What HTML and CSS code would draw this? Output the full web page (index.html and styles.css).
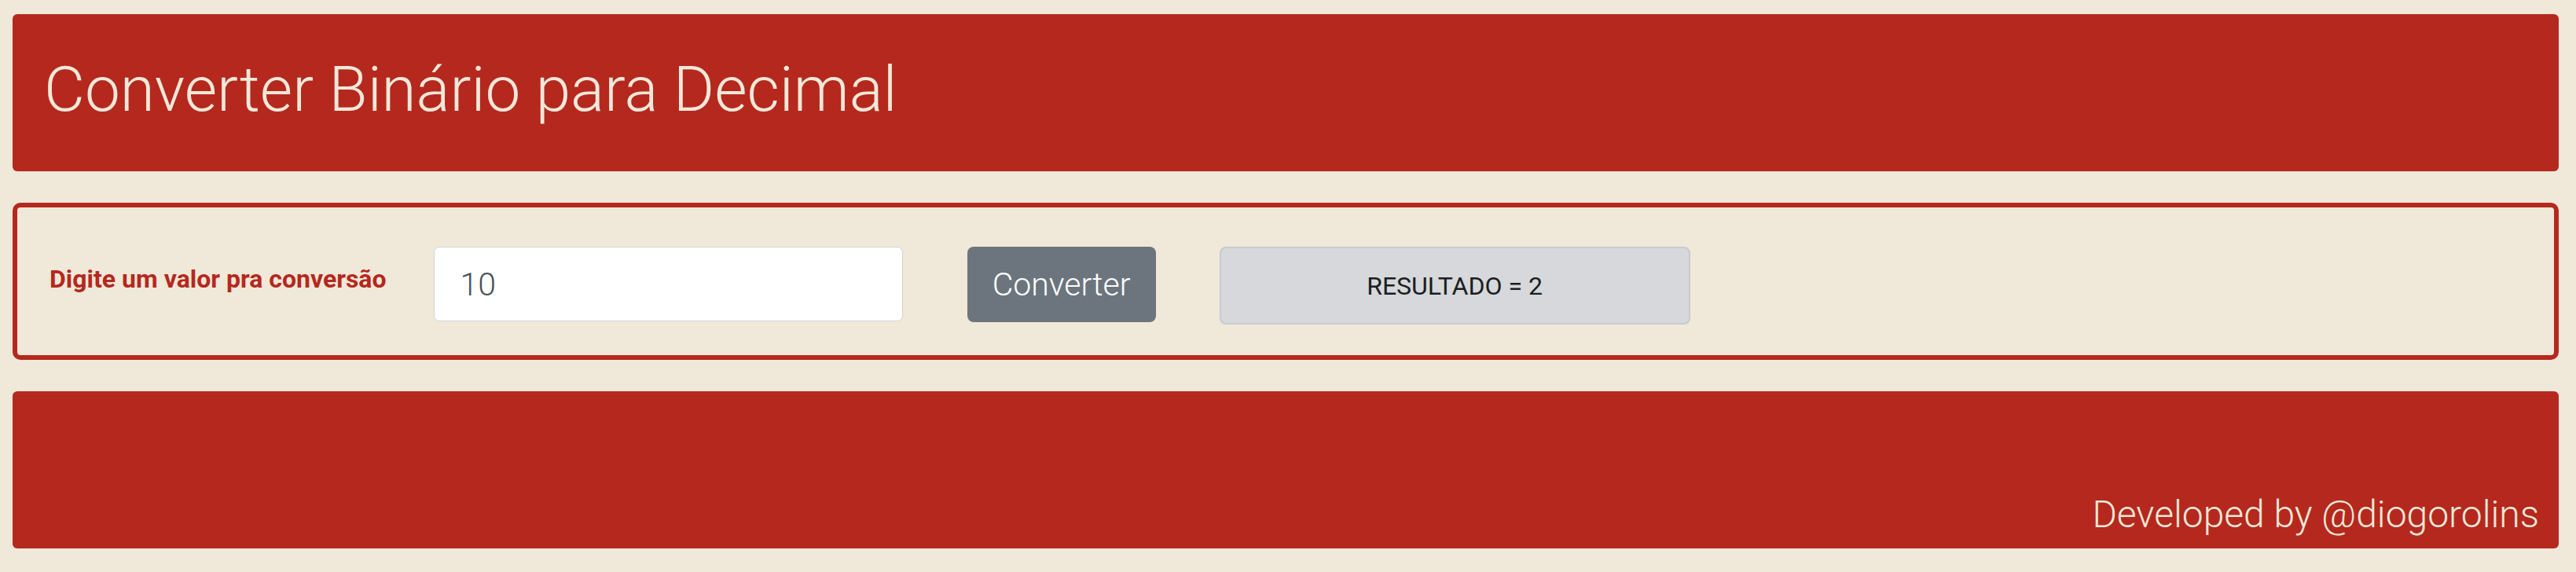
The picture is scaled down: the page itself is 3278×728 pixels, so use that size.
FILE: index.html
```html
<!DOCTYPE html>
<html lang="pt-BR">
<head>
<meta charset="utf-8">
<title>Converter Binário para Decimal</title>
<link rel="stylesheet" href="styles.css">
</head>
<body>
  <header class="top-bar">
    <h1 class="title">Converter Binário para Decimal</h1>
  </header>
  <main class="panel">
    <label class="field-label" for="valor">Digite um valor pra conversão</label>
    <input class="field-input" id="valor" type="text" value="10">
    <button class="btn-convert" type="button">Converter</button>
    <div class="result">RESULTADO = 2</div>
  </main>
  <footer class="bottom-bar">
    <span class="credit">Developed by @diogorolins</span>
  </footer>
</body>
</html>
```

FILE: styles.css
```css
* { box-sizing: border-box; }

html, body {
  background: #f0e8d8;
}

body {
  margin: 0;
  padding: 18px 22px 0 16px;
  font-family: Roboto, "Liberation Sans", sans-serif;
}

.top-bar {
  height: 200px;
  background: #b5281e;
  border-radius: 6px;
  display: flex;
  align-items: center;
  padding-left: 40px;
}

.title {
  margin: 0;
  font-size: 80px;
  font-weight: 300;
  line-height: 1.2;
  color: #f0e8d8;
  padding-bottom: 8px;
}

.panel {
  margin-top: 40px;
  height: 200px;
  border: 6px solid #b5281e;
  border-radius: 10px;
  display: flex;
  align-items: flex-start;
  padding: 50px 0 0 41px;
}

.field-label {
  font-weight: 700;
  font-size: 32px;
  line-height: 36px;
  color: #b5281e;
  margin-top: 23px;
  margin-right: 60px;
}

.field-input {
  width: 597px;
  height: 95px;
  border: 1px solid #ced4da;
  border-radius: 7px;
  background: #fff;
  font-family: Roboto, "Liberation Sans", sans-serif;
  font-weight: 300;
  font-size: 41px;
  color: #495057;
  padding: 0 33px;
  margin-right: 82px;
}

.btn-convert {
  width: 240px;
  height: 96px;
  border: 0;
  border-radius: 8px;
  background: #6c757d;
  color: #fff;
  font-family: Roboto, "Liberation Sans", sans-serif;
  font-weight: 300;
  font-size: 41px;
  padding: 0;
  margin-right: 81px;
}

.result {
  width: 599px;
  height: 99px;
  background: #d6d8db;
  border: 2px solid #c8cacd;
  border-radius: 8px;
  display: flex;
  align-items: center;
  justify-content: center;
  font-size: 32px;
  font-weight: 400;
  color: #1b1e21;
}

.bottom-bar {
  margin-top: 40px;
  height: 200px;
  background: #b5281e;
  border-radius: 6px;
  display: flex;
  align-items: flex-end;
  justify-content: flex-end;
  padding: 0 25px 14px 0;
}

.credit {
  font-size: 48px;
  font-weight: 300;
  color: #f0e8d8;
  line-height: 1.2;
}
```
